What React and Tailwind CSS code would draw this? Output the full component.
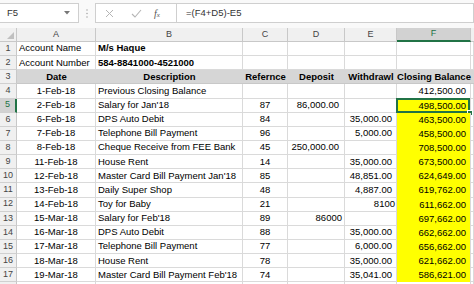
import React from "react";

const rows = [
  { n: 1, a: "Account Name", b: "M/s Haque", bBold: true, aLeft: true },
  { n: 2, a: "Account Number", b: "584-8841000-4521000", bBold: true, aLeft: true },
  { n: 3, header: true },
  { n: 4, a: "1-Feb-18", b: "Previous Closing Balance", c: "", d: "", e: "", f: "412,500.00", white: true },
  { n: 5, a: "2-Feb-18", b: "Salary for Jan'18", c: "87", d: "86,000.00", e: "", f: "498,500.00", sel: true },
  { n: 6, a: "6-Feb-18", b: "DPS Auto Debit", c: "84", d: "", e: "35,000.00", f: "463,500.00" },
  { n: 7, a: "7-Feb-18", b: "Telephone Bill Payment", c: "96", d: "", e: "5,000.00", f: "458,500.00" },
  { n: 8, a: "8-Feb-18", b: "Cheque Receive from FEE Bank", c: "45", d: "250,000.00", e: "", f: "708,500.00" },
  { n: 9, a: "11-Feb-18", b: "House Rent", c: "14", d: "", e: "35,000.00", f: "673,500.00" },
  { n: 10, a: "12-Feb-18", b: "Master Card Bill Payment Jan'18", c: "85", d: "", e: "48,851.00", f: "624,649.00" },
  { n: 11, a: "13-Feb-18", b: "Daily Super Shop", c: "48", d: "", e: "4,887.00", f: "619,762.00" },
  { n: 12, a: "14-Feb-18", b: "Toy for Baby", c: "21", d: "", e: "8100", ePlain: true, f: "611,662.00" },
  { n: 13, a: "15-Mar-18", b: "Salary for Feb'18", c: "89", d: "86000", dPlain: true, e: "", f: "697,662.00" },
  { n: 14, a: "16-Mar-18", b: "DPS Auto Debit", c: "88", d: "", e: "35,000.00", f: "662,662.00" },
  { n: 15, a: "17-Mar-18", b: "Telephone Bill Payment", c: "77", d: "", e: "6,000.00", f: "656,662.00" },
  { n: 16, a: "18-Mar-18", b: "House Rent", c: "78", d: "", e: "35,000.00", f: "621,662.00" },
  { n: 17, a: "19-Mar-18", b: "Master Card Bill Payment Feb'18", c: "74", d: "", e: "35,041.00", f: "586,621.00" },
  { n: 18, empty: true },
];

const cell = "h-full border-r border-b border-[#dadada] flex items-center whitespace-nowrap";

function Row({ r }) {
  const rh = r.sel
    ? "bg-[#d2d2d2] text-[#217346] border-r-2 border-r-[#217346]"
    : "bg-[#f0f0f0] text-[#444] border-r border-r-[#c8c8c8]";
  if (r.header) {
    return (
      <div className="flex h-[14.15px] shrink-0">
        <div className={`w-[17px] h-full flex items-center justify-center text-[9px] border-b border-b-[#d0d0d0] ${rh}`}>{r.n}</div>
        <div className="flex h-full flex-1 bg-[#d6d6d6] font-bold text-black border-b border-[#c8c8c8]">
          <div className="w-[79px] flex items-center justify-center">Date</div>
          <div className="w-[147px] flex items-center justify-center">Description</div>
          <div className="w-[45px] flex items-center justify-center">Refernce</div>
          <div className="w-[57px] flex items-center justify-center">Deposit</div>
          <div className="w-[52px] flex items-center justify-center">Withdrawl</div>
          <div className="w-[74px] flex items-center justify-center">Closing Balance</div>
        </div>
      </div>
    );
  }
  const yellow = !r.white && !r.empty && r.f && r.n >= 5;
  return (
    <div className="flex h-[14.15px] shrink-0">
      <div className={`w-[17px] h-full flex items-center justify-center text-[9px] border-b border-b-[#d0d0d0] ${rh}`}>{r.empty ? "" : r.n}</div>
      <div className={`w-[79px] ${cell} ${r.aLeft ? "pl-[2px] overflow-visible" : "justify-center"}`}>{r.a}</div>
      <div className={`w-[147px] ${cell} pl-[2px] ${r.bBold ? "font-bold" : ""}`}>{r.b}</div>
      <div className={`w-[45px] ${cell} justify-center`}>{r.c}</div>
      <div className={`w-[57px] ${cell} justify-end ${r.dPlain ? "pr-[2px]" : "pr-[5px]"}`}>{r.d}</div>
      <div className={`w-[52px] ${cell} justify-end ${r.ePlain ? "pr-[1px]" : "pr-[4px]"}`}>{r.e}</div>
      <div
        className={`w-[74px] h-full flex items-center justify-end pr-[4px] relative ${
          yellow ? "bg-[#ffff00] border-r border-r-[#dadada]" : "border-r border-b border-[#dadada]"
        }`}
      >
        {r.f}
        {r.sel && (
          <>
            <div className="absolute -top-[1px] -left-[1px] right-0 bottom-0 border-2 border-[#217346]"></div>
            <div className="absolute -bottom-[3px] -right-[3px] w-[6px] h-[6px] bg-[#217346] border border-white"></div>
          </>
        )}
      </div>
      <div className={`flex-1 ${cell}`}></div>
    </div>
  );
}

export default function App() {
  return (
    <div className="w-[474px] h-[284px] overflow-hidden bg-white flex flex-col font-['Liberation_Sans',Arial,sans-serif] text-[9.5px] text-black">
      {/* formula bar */}
      <div className="h-[28px] shrink-0 bg-[#f9f9f9] flex items-start pt-[3px] text-[9.5px] text-[#333]">
        <div className="w-[79px] h-[20px] bg-white border border-[#cfcfcf] border-l-0 flex items-center justify-between pl-[7px] pr-[8px]">
          <span>F5</span>
          <svg width="6" height="4" viewBox="0 0 6 4"><path d="M0 0h6L3 3.5z" fill="#777" /></svg>
        </div>
        <div className="w-[16px] h-[20px] flex items-center justify-center">
          <svg width="2" height="9" viewBox="0 0 2 9"><circle cx="1" cy="1" r="0.8" fill="#aaa" /><circle cx="1" cy="4.5" r="0.8" fill="#aaa" /><circle cx="1" cy="8" r="0.8" fill="#aaa" /></svg>
        </div>
        <div className="w-[81px] h-[20px] bg-white border border-[#cfcfcf] border-r-0 flex items-center">
          <svg className="ml-[9px]" width="9" height="9" viewBox="0 0 9 9"><path d="M1 1l7 7M8 1l-7 7" stroke="#b5b5b5" strokeWidth="1" /></svg>
          <svg className="ml-[17px]" width="11" height="9" viewBox="0 0 11 9"><path d="M1 5l3 3 6-7" stroke="#b5b5b5" strokeWidth="1.1" fill="none" /></svg>
          <span className="ml-[12px] italic font-['Liberation_Serif',serif] text-[10px] text-[#555]">f<span className="text-[7px]">x</span></span>
        </div>
        <div className="flex-1 h-[20px] bg-white border border-[#cfcfcf] flex items-center pl-[9px]">
          =(F4+D5)-E5
        </div>
      </div>
      {/* column headers */}
      <div className="h-[14px] shrink-0 flex bg-[#f0f0f0] text-[#444] text-[9px]">
        <div className="w-[17px] h-full border-r border-b border-[#c8c8c8] relative">
          <svg className="absolute right-[2px] bottom-[2px]" width="7" height="7" viewBox="0 0 7 7"><path d="M7 0V7H0z" fill="#c0c0c0" /></svg>
        </div>
        <div className="w-[79px] h-full border-r border-b border-[#c8c8c8] flex items-center justify-center">A</div>
        <div className="w-[147px] h-full border-r border-b border-[#c8c8c8] flex items-center justify-center">B</div>
        <div className="w-[45px] h-full border-r border-b border-[#c8c8c8] flex items-center justify-center">C</div>
        <div className="w-[57px] h-full border-r border-b border-[#c8c8c8] flex items-center justify-center">D</div>
        <div className="w-[52px] h-full border-r border-b border-[#c8c8c8] flex items-center justify-center">E</div>
        <div className="w-[74px] h-full bg-[#d2d2d2] border-r border-r-[#c8c8c8] border-b-2 border-b-[#217346] flex items-center justify-center text-[#217346]">F</div>
        <div className="flex-1 h-full border-b border-[#c8c8c8]"></div>
      </div>
      {rows.map((r) => (
        <Row key={r.n} r={r} />
      ))}
    </div>
  );
}
